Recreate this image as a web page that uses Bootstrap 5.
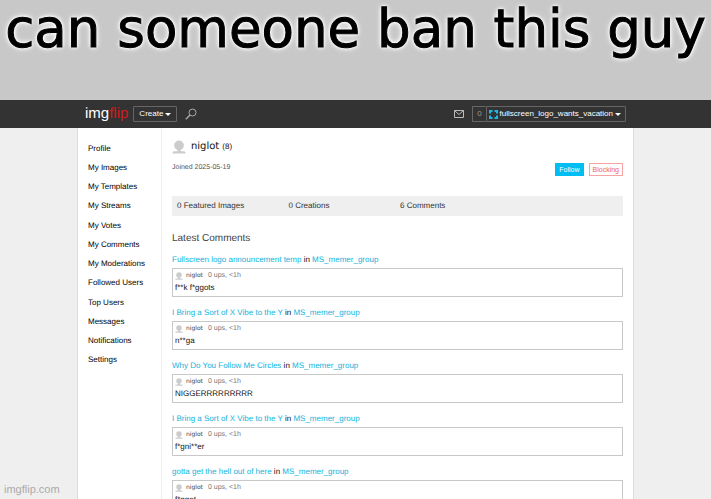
<!DOCTYPE html>
<html lang="en">
<head>
<meta charset="utf-8">
<meta name="viewport" content="width=device-width, initial-scale=1">
<title>Imgflip profile</title>
<link href="https://cdn.jsdelivr.net/npm/bootstrap@5.3.0/dist/css/bootstrap.min.css" rel="stylesheet">
<style>
body{font-family:"Liberation Sans",Arial,sans-serif;font-size:8px;line-height:12px;color:#111;background:#efefef;text-rendering:geometricPrecision}
a{text-decoration:none;color:#10b4dc}
.caption{background:#c8c8c8;height:100px;font:53px/59px "DejaVu Sans",Verdana,sans-serif;color:#000;-webkit-text-stroke:1px #000;text-shadow:0 0 3px #fff,0 0 3px #fff,0 0 5px #fff,0 0 6px #fff}
.wrap{max-width:557px}
.topbar{background:#333;height:28px}
.logo{font-size:15px;line-height:24px;color:#fff}
.logo span{color:#d3191c}
.bar-btn{font-size:8px;line-height:14px;height:16px;color:#fff;background:none;border:1px solid #666;border-radius:1px;padding:0 5px}
.user-btn{gap:2px;padding:0 4px 0 2px}
.caret{width:0;height:0;border:3px solid transparent;border-top-color:currentColor;border-bottom:0}
.create{gap:2px;margin-left:5px}
.count{color:#999;border-right-width:0;padding:0 4px}
.panel{background:#fff;border:solid #dcdcdc;border-width:0 1px}
.side{width:84px;border-right:1px solid #eee;padding:11px 0 0 10px}
.side ul{height:231px}
.side a{color:#000}
.main{padding:12px 10px 0}
.uname{font:10px/14px "DejaVu Sans",Verdana,sans-serif;color:#111;margin:0 3px 0 5px}
.meta-name{font:6px/10px "DejaVu Sans",Verdana,sans-serif;color:#444;margin:0 5px 0 3px}
.joined{font-size:7px;color:#555}
.info{margin-top:8px;min-height:15px}
.acts{gap:5px;padding-top:1px}
.act{font-size:7px;line-height:11px;height:13px;border:1px solid #f5a3a3;background:#fff;color:#ee5f5f;border-radius:0;padding:0 3px}
.act-on{background:#00bdf2;border-color:#00bdf2;color:#fff}
.stats{background:#efefef;color:#333;height:20px;padding-left:5px;margin-top:19px}
h2{font-size:10px;line-height:14px;color:#444;margin:16px 0 4px;font-weight:400}
.thread{line-height:16px;padding-top:2px;margin-bottom:6px}
.reply{border:1px solid #c8c8c8;height:29px;padding:2px;line-height:14px}
.meta{height:10px;color:#777;font-size:7px}
.watermark{left:4px;bottom:0;font-size:11px;line-height:18px;color:#aaa}
</style>
</head>
<body class="vh-100 overflow-hidden d-flex flex-column position-relative">
<svg class="d-none"><symbol id="person" viewBox="0 0 13 13"><circle cx="6.500" cy="5" r="4.500" fill="#ccc"/><path d="M5 8h3v3H5zM.5 12.500v-1q0-1 2-1h8q2 0 2 1v1z" fill="#ccc"/></symbol></svg>
<header class="caption text-center text-nowrap flex-shrink-0">can someone ban this guy</header>
<nav class="topbar flex-shrink-0">
<div class="wrap mx-auto h-100 d-flex align-items-center px-2">
<a class="logo" href="#">img<span>flip</span></a>
<button class="bar-btn create d-flex align-items-center" type="button">Create <span class="caret"></span></button>
<a class="ms-2 d-flex" href="#" aria-label="Search"><svg width="12" height="12" viewBox="0 0 12 12" fill="none" stroke="#aaa"><circle cx="7.500" cy="4.500" r="3.500"/><path d="M5 7 .8 11.200" stroke-width="1.400"/></svg></a>
<a class="ms-auto me-2 d-flex" href="#" aria-label="Messages"><svg width="10" height="8" viewBox="0 0 10 8" fill="none" stroke="#bbb"><path d="M.5.5h9v7h-9zM.5.5 5 4.500 9.500.5"/></svg></a>
<button class="bar-btn count" type="button">0</button>
<button class="bar-btn user-btn d-flex align-items-center" type="button"><svg width="9" height="9" viewBox="0 0 9 9" fill="none" stroke="#1fb6e8" stroke-width="2"><path d="M1 3.500V1h2.500M5.500 1H8v2.500M8 5.500V8H5.500M3.500 8H1V5.500"/></svg><span>fullscreen_logo_wants_vacation</span><span class="caret"></span></button>
</div>
</nav>
<div class="wrap panel w-100 mx-auto d-flex flex-fill">
<aside class="side flex-shrink-0">
<ul class="list-unstyled d-flex flex-column justify-content-around mb-0">
<li><a href="#">Profile</a></li><li><a href="#">My Images</a></li><li><a href="#">My Templates</a></li><li><a href="#">My Streams</a></li><li><a href="#">My Votes</a></li><li><a href="#">My Comments</a></li><li><a href="#">My Moderations</a></li><li><a href="#">Followed Users</a></li><li><a href="#">Top Users</a></li><li><a href="#">Messages</a></li><li><a href="#">Notifications</a></li><li><a href="#">Settings</a></li>
</ul>
</aside>
<main class="main flex-fill">
<div class="d-flex align-items-center"><svg width="14" height="14"><use href="#person"/></svg><span class="uname">niglot</span><span>(8)</span></div>
<div class="info d-flex justify-content-between"><span class="joined">Joined 2025-05-19</span><span class="acts d-flex"><button class="act act-on" type="button">Follow</button><button class="act" type="button">Blocking</button></span></div>
<div class="stats row g-0 align-items-center"><div class="col-3">0 Featured Images</div><div class="col-3">0 Creations</div><div class="col-3">6 Comments</div></div>
<h2>Latest Comments</h2>
<div class="thread"><a href="#">Fullscreen logo announcement temp</a> in <a href="#">MS_memer_group</a>
<div class="reply"><div class="meta d-flex align-items-center"><svg width="8" height="8"><use href="#person"/></svg><span class="meta-name">niglot</span><span>0 ups, &lt;1h</span></div>f**k f*ggots</div></div>
<div class="thread"><a href="#">I Bring a Sort of X Vibe to the Y</a> in <a href="#">MS_memer_group</a>
<div class="reply"><div class="meta d-flex align-items-center"><svg width="8" height="8"><use href="#person"/></svg><span class="meta-name">niglot</span><span>0 ups, &lt;1h</span></div>n**ga</div></div>
<div class="thread"><a href="#">Why Do You Follow Me Circles</a> in <a href="#">MS_memer_group</a>
<div class="reply"><div class="meta d-flex align-items-center"><svg width="8" height="8"><use href="#person"/></svg><span class="meta-name">niglot</span><span>0 ups, &lt;1h</span></div>NIGGERRRRRRRRR</div></div>
<div class="thread"><a href="#">I Bring a Sort of X Vibe to the Y</a> in <a href="#">MS_memer_group</a>
<div class="reply"><div class="meta d-flex align-items-center"><svg width="8" height="8"><use href="#person"/></svg><span class="meta-name">niglot</span><span>0 ups, &lt;1h</span></div>f*gni**er</div></div>
<div class="thread"><a href="#">gotta get the hell out of here</a> in <a href="#">MS_memer_group</a>
<div class="reply"><div class="meta d-flex align-items-center"><svg width="8" height="8"><use href="#person"/></svg><span class="meta-name">niglot</span><span>0 ups, &lt;1h</span></div>f*ggot</div></div>
</main>
</div>
<div class="watermark position-absolute">imgflip.com</div>
<script src="https://cdn.jsdelivr.net/npm/bootstrap@5.3.0/dist/js/bootstrap.bundle.min.js"></script>
</body>
</html>
